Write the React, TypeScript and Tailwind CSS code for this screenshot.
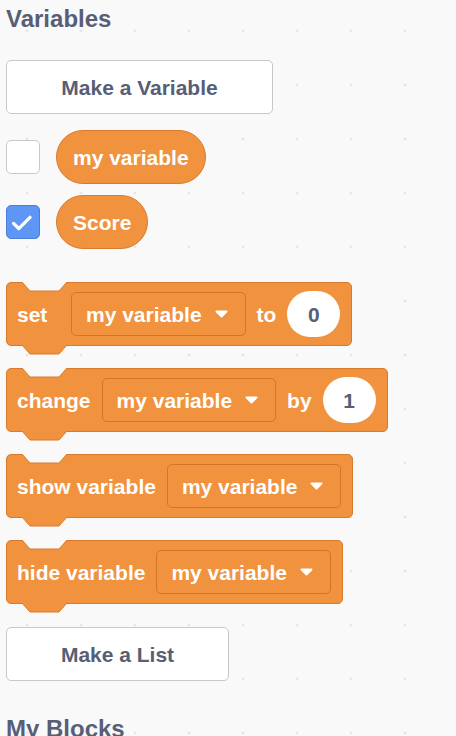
import React from 'react';

const FONT = { fontFamily: '"Liberation Sans", Arial, Helvetica, sans-serif' };

function Notch() {
  // top notch cut into a stack block
  return (
    <svg className="absolute left-[15px] top-[-1px]" width="46" height="11" viewBox="0 0 46 11" overflow="visible">
      <path d="M0 0 L8 9 L37 9 L45 0 Z" fill="#f9f9f9" stroke="none" />
      <path d="M0 0 L8 9 L37 9 L45 0" fill="none" stroke="#d97b2c" strokeWidth="1" strokeLinejoin="round" />
    </svg>
  );
}

function Tab() {
  // bottom tab of a stack block
  return (
    <svg className="absolute left-[15px] top-full" width="46" height="11" viewBox="0 0 46 11" overflow="visible">
      <path d="M0 0 L8 9 L37 9 L45 0 Z" fill="#f0923e" stroke="none" />
      <path d="M0 0 L8 9 L37 9 L45 0" fill="none" stroke="#d97b2c" strokeWidth="1" strokeLinejoin="round" />
    </svg>
  );
}

function Arrow() {
  return (
    <svg width="13" height="8" viewBox="0 0 13 8">
      <path d="M1.5 1.5 L11.5 1.5 L6.5 6.5 Z" fill="white" stroke="white" strokeWidth="2" strokeLinejoin="round" />
    </svg>
  );
}

function Dropdown() {
  return (
    <div className="flex h-[44px] items-center rounded-[5px] border border-[#d27528] bg-[#f0923e] pl-[14px] pr-[17px]">
      <span>my variable</span>
      <span className="ml-[13px] flex items-center">
        <Arrow />
      </span>
    </div>
  );
}

function Oval({ value }: { value: string }) {
  return (
    <div className="flex h-[46px] w-[53px] items-center justify-center rounded-full bg-white text-[#575e75]">
      {value}
    </div>
  );
}

function Block({ children, className = '' }: { children: React.ReactNode; className?: string }) {
  return (
    <div
      className={`relative flex h-[64px] items-center gap-[11px] self-start rounded-[5px] border border-[#d97b2c] bg-[#f0923e] pl-[10px] pr-[11px] text-white ${className}`}
    >
      <Notch />
      {children}
      <Tab />
    </div>
  );
}

function Checkbox({ checked }: { checked?: boolean }) {
  if (checked) {
    return (
      <div className="flex h-[34px] w-[34px] items-center justify-center rounded-[5px] border border-[#4a7ed8] bg-[#5e96f6]">
        <svg width="34" height="34" viewBox="0 0 34 34">
          <path d="M7 18.5 L12.5 24 L24.5 12" fill="none" stroke="white" strokeWidth="3.5" strokeLinecap="round" strokeLinejoin="round" />
        </svg>
      </div>
    );
  }
  return <div className="h-[34px] w-[34px] rounded-[5px] border border-[#c8c8c8] bg-white" />;
}

function Pill({ label }: { label: string }) {
  return (
    <div className="flex h-[54px] items-center rounded-full border border-[#d97b2c] bg-[#f0923e] px-[16px] text-white">
      {label}
    </div>
  );
}

export default function App() {
  return (
    <main
      style={FONT}
      className="h-[736px] w-full overflow-hidden bg-[#f9f9f9] bg-[radial-gradient(circle,#e6e6e6_1px,transparent_1.8px)] bg-[size:54px_54px] bg-[position:0px_4px] text-[21px] font-bold leading-none"
    >
      <div className="flex flex-col pl-[6px] pt-[7px]">
        <h2 className="text-[24px] leading-[24px] text-[#575e75]">Variables</h2>

        <button className="mt-[29px] flex h-[54px] w-[267px] items-center justify-center rounded-[5px] border border-[#c8c8c8] bg-white text-[#575e75]">
          Make a Variable
        </button>

        <div className="mt-[16px] flex items-center gap-[16px]">
          <Checkbox />
          <Pill label="my variable" />
        </div>
        <div className="mt-[11px] flex items-center gap-[16px]">
          <Checkbox checked />
          <Pill label="Score" />
        </div>

        <Block className="mt-[33px]">
          <span className="w-[43px]">set</span>
          <Dropdown />
          <span>to</span>
          <Oval value="0" />
        </Block>

        <Block className="mt-[22px]">
          <span>change</span>
          <Dropdown />
          <span>by</span>
          <Oval value="1" />
        </Block>

        <Block className="mt-[22px]">
          <span>show variable</span>
          <Dropdown />
        </Block>

        <Block className="mt-[22px]">
          <span>hide variable</span>
          <Dropdown />
        </Block>

        <button className="mt-[23px] flex h-[54px] w-[223px] items-center justify-center rounded-[5px] border border-[#c8c8c8] bg-white text-[#575e75]">
          Make a List
        </button>

        <h2 className="mt-[36px] text-[24px] leading-[24px] text-[#575e75]">My Blocks</h2>
      </div>
    </main>
  );
}
